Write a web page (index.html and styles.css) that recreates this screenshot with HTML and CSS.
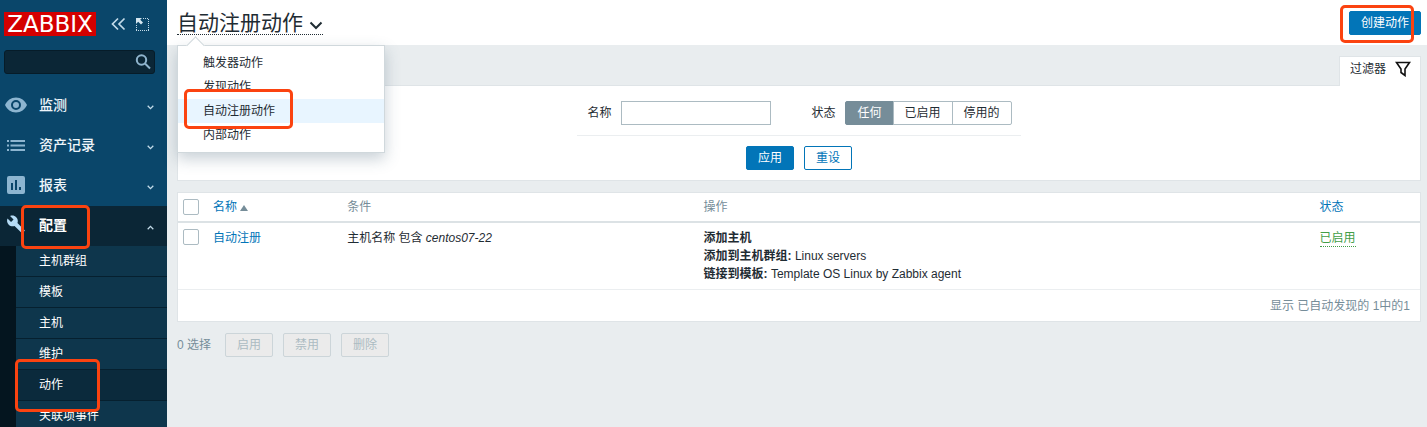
FILE: index.html
```html
<!DOCTYPE html>
<html lang="zh-CN">
<head>
<meta charset="utf-8">
<title>自动注册动作</title>
<link rel="stylesheet" href="styles.css">
</head>
<body>
<aside class="sidebar">
  <div class="brand">
    <a class="logo" href="#">ZABBIX</a>
    <button class="icon-button" type="button" aria-label="收起侧栏"><svg width="15" height="14" viewBox="0 0 15 14"><path d="M7 1.500L1.500 7L7 12.500M13.500 1.500L8 7L13.500 12.500"/></svg></button>
    <button class="icon-button" type="button" aria-label="隐藏侧栏"><svg width="13" height="13" viewBox="0 0 13 13"><path class="dots" d="M7 .5H13M12.500 1V12M.5 7V12M0 12.500H13"/><path class="solid" d="M0 0H6L4.200 1.800L7 4.600L5 6.500L2.200 3.800L0 6Z"/></svg></button>
  </div>
  <form class="search">
    <input type="text" aria-label="搜索">
    <button type="button" aria-label="搜索"><svg width="16" height="16" viewBox="0 0 16 16"><circle cx="6.500" cy="6" r="4.700"/><path d="M10 9.500L15 14.500"/></svg></button>
  </form>
  <nav class="menu">
    <a class="menu-item" href="#"><svg class="glyph" width="22" height="16" viewBox="0 0 22 16"><path fill-rule="evenodd" d="M11 .5C6 .5 2 3.500 0 8c2 4.500 6 7.500 11 7.500S20 12.500 22 8C20 3.500 16 .5 11 .5zM11 13a5 5 0 1 1 0-10a5 5 0 0 1 0 10zM11 5a3 3 0 1 0 0 6a3 3 0 0 0 0-6z"/></svg><span>监测</span><svg class="arrow" width="7" height="5" viewBox="0 0 7 5"><path d="M.7 .8L3.500 3.600L6.300 .8"/></svg></a>
    <a class="menu-item" href="#"><svg class="glyph" width="22" height="16" viewBox="0 0 22 16"><path d="M2 3h2v2H2zM5.500 3H20v2H5.500zM2 7.500h2v2H2zM5.500 7.500H20v2H5.500zM2 12h2v2H2zM5.500 12H20v2H5.500z"/></svg><span>资产记录</span><svg class="arrow" width="7" height="5" viewBox="0 0 7 5"><path d="M.7 .8L3.500 3.600L6.300 .8"/></svg></a>
    <a class="menu-item" href="#"><svg class="glyph" width="22" height="18" viewBox="0 0 22 18"><path fill-rule="evenodd" d="M4 0h14a2 2 0 0 1 2 2v14a2 2 0 0 1-2 2H4a2 2 0 0 1-2-2V2a2 2 0 0 1 2-2zM6 7v7h2V7zM10 4v10h2V4zM14 11v3h2v-3z"/></svg><span>报表</span><svg class="arrow" width="7" height="5" viewBox="0 0 7 5"><path d="M.7 .8L3.500 3.600L6.300 .8"/></svg></a>
    <a class="menu-item open" href="#"><svg class="glyph" width="22" height="20" viewBox="0 0 22 20"><path d="M17.500 16.300L11.300 10.100C12 8.300 11.600 6.300 10.200 4.800C8.700 3.300 6.500 3 4.700 3.800L7.800 6.900L5.600 9.100L2.400 6C1.600 7.800 2 10 3.500 11.500C4.900 12.900 7 13.300 8.700 12.600L14.900 18.800C15.200 19.100 15.700 19.100 16 18.800L17.600 17.200C17.900 17 17.900 16.500 17.500 16.300Z" transform="translate(-.2 -3.200) scale(1.120)"/></svg><span>配置</span><svg class="arrow" width="7" height="5" viewBox="0 0 7 5"><path d="M.7 4.200L3.500 1.400L6.300 4.200"/></svg><i class="mark mark-config"></i></a>
    <div class="submenu">
      <a href="#">主机群组</a>
      <a href="#">模板</a>
      <a href="#">主机</a>
      <a href="#">维护</a>
      <a class="current" href="#">动作<i class="mark mark-action"></i></a>
      <a href="#">关联项事件</a>
    </div>
  </nav>
</aside>
<main class="page">
  <header class="header">
    <div class="title-menu">
      <h1><button class="title" type="button">自动注册动作<svg width="14" height="9" viewBox="0 0 14 9"><path d="M1.500 1.500L7 7L12.500 1.500"/></svg></button></h1>
      <div class="popup">
        <a href="#">触发器动作</a>
        <a href="#">发现动作</a>
        <a class="selected" href="#">自动注册动作<i class="mark mark-auto"></i></a>
        <a href="#">内部动作</a>
      </div>
    </div>
    <div class="create"><button class="button primary" type="button">创建动作</button><i class="mark mark-create"></i></div>
  </header>
  <div class="content">
    <button class="filter-tab" type="button">过滤器<svg width="16" height="16" viewBox="0 0 16 16"><path d="M1.500 1.500H14.500L10 8V14.500L6 11.500V8Z"/></svg></button>
    <form class="filter">
      <div class="filter-fields">
        <label for="name">名称</label>
        <input class="text" id="name" type="text">
        <fieldset class="segments">
          <legend>状态</legend>
          <input type="radio" name="status" id="any" checked><label for="any">任何</label>
          <input type="radio" name="status" id="on"><label for="on">已启用</label>
          <input type="radio" name="status" id="off"><label for="off">停用的</label>
        </fieldset>
      </div>
      <div class="filter-actions">
        <button class="button primary" type="button">应用</button>
        <button class="button" type="button">重设</button>
      </div>
    </form>
    <table class="list">
      <colgroup><col class="col-check"><col class="col-name"><col class="col-cond"><col class="col-op"><col></colgroup>
      <thead>
        <tr><th><input type="checkbox" aria-label="全选"></th><th><a href="#">名称<span class="sort"></span></a></th><th>条件</th><th>操作</th><th><a href="#">状态</a></th></tr>
      </thead>
      <tbody>
        <tr><td><input type="checkbox" aria-label="选择 自动注册"></td><td><a href="#">自动注册</a></td><td>主机名称 包含 <em>centos07-22</em></td><td><b>添加主机</b><br><b>添加到主机群组:</b> Linux servers<br><b>链接到模板:</b> Template OS Linux by Zabbix agent</td><td><a class="enabled" href="#">已启用</a></td></tr>
      </tbody>
      <tfoot>
        <tr><td colspan="5">显示 已自动发现的 1中的1</td></tr>
      </tfoot>
    </table>
    <div class="bulk">
      <span>0 选择</span>
      <button class="button" type="button" disabled>启用</button>
      <button class="button" type="button" disabled>禁用</button>
      <button class="button" type="button" disabled>删除</button>
    </div>
  </div>
</main>
</body>
</html>
```
FILE: styles.css
```css
* { box-sizing: border-box; }

body {
  margin: 0;
  display: flex;
  height: 100vh;
  overflow: hidden;
  background: #e9edef;
  color: #1f2c33;
  font: 12px/18px "Liberation Sans", "Noto Sans CJK SC", sans-serif;
}

a { color: #0275b8; text-decoration: none; }
button, input { font: inherit; color: inherit; margin: 0; }
button { cursor: pointer; }
svg { flex: none; }

/* Sidebar */
.sidebar { flex: none; width: 167px; background: #0a466a; overflow: hidden; }
.brand { display: flex; align-items: center; gap: 10px; padding: 12px 4px 0; }
.logo {
  width: 92px;
  margin-right: 5px;
  background: #d40000;
  color: #fff;
  font: 23px/24px "DejaVu Sans", sans-serif;
  text-align: center;
}
.icon-button { display: flex; padding: 0; border: 0; background: none; }
.icon-button svg { fill: none; stroke: #c3dbe9; stroke-width: 1.7; }
.icon-button .dots { stroke-width: 1; stroke-dasharray: 1 1; }
.icon-button .solid { fill: #d5e6f0; stroke: none; }
.search {
  display: flex;
  align-items: center;
  height: 24px;
  margin: 14px 12px 0 4px;
  border: 1px solid #061c29;
  border-radius: 3px;
  background: #0b2636;
  color: #fff;
}
.search input { flex: 1; min-width: 0; padding: 0 6px; border: 0; outline: 0; background: none; }
.search button { display: flex; padding: 0 3px; border: 0; background: none; }
.search svg { fill: none; stroke: #8fb4cd; stroke-width: 2; }
.menu { padding-top: 12px; }
.menu-item {
  position: relative;
  display: flex;
  align-items: center;
  height: 40px;
  padding: 0 13px 2px 5px;
  color: #eef5fa;
  font-size: 14px;
  font-weight: 500;
}
.menu-item span { flex: 1; padding-left: 12px; }
.glyph { fill: #8db5d0; }
.arrow { margin-top: 4px; fill: none; stroke: #c3dbe9; stroke-width: 1.3; }
.menu-item.open { background: #0b2636; color: #fff; font-weight: 700; }
.open .glyph { fill: #b5dbf5; }
.submenu { border-left: 16px solid #04151f; background: #0e364c; }
.submenu a {
  position: relative;
  display: block;
  padding: 6px 0 6px 23px;
  border-bottom: 1px solid #06202f;
  color: #fff;
}
.submenu .current { padding-left: 21px; border-left: 2px solid #6fa8cb; background: #0b2a3c; }

/* Highlight frames laid over the controls */
.mark { position: absolute; z-index: 5; border: 3px solid #fb4310; border-radius: 5px; pointer-events: none; }
.mark-config { left: 21px; top: -1px; width: 69px; height: 44px; }
.mark-action { left: -3px; top: -11px; width: 85px; height: 53px; }
.mark-auto { left: 6px; top: -10px; width: 109px; height: 40px; }
.mark-create { right: 7px; top: -6px; width: 74px; height: 38px; }

/* Header */
.page { flex: 1; min-width: 0; }
.header {
  display: flex;
  justify-content: space-between;
  align-items: flex-start;
  height: 45px;
  padding: 11px 6px 0 10px;
  background: #fff;
}
.title-menu, .create { position: relative; }
h1 { margin: 0; font: inherit; }
.title {
  display: flex;
  align-items: center;
  gap: 6px;
  padding: 0;
  border: 0;
  border-bottom: 1px dotted #1f2c33;
  background: none;
  font-size: 21px;
  line-height: 23px;
}
.title svg { margin-top: 6px; fill: none; stroke: #1f2c33; stroke-width: 2; }
.popup {
  position: absolute;
  z-index: 3;
  left: 0;
  top: 34px;
  width: 208px;
  padding: 5px 0;
  border: 1px solid #d0d8dc;
  background: #fff;
  box-shadow: 0 6px 14px rgba(60, 90, 110, .28);
}
.popup::before {
  content: "";
  position: absolute;
  left: 11px;
  top: -7px;
  width: 12px;
  height: 12px;
  border: 1px solid #d0d8dc;
  border-width: 1px 0 0 1px;
  background: #fff;
  transform: rotate(45deg);
}
.popup a { position: relative; display: block; padding: 0 25px; color: #1f2c33; line-height: 24px; }
.popup .selected { background: #e8f5ff; }

.button {
  height: 24px;
  padding: 0 11px;
  border: 1px solid #0275b8;
  border-radius: 2px;
  background: #fff;
  color: #0275b8;
  line-height: 22px;
}
.button.primary { background: #0275b8; color: #fff; }
.button:disabled { border-color: #ccd5d9; background: #ebebeb; color: #acbbc2; }

/* Filter */
.content { display: flex; flex-direction: column; padding: 11px 6px 0 10px; }
.filter-tab {
  position: relative;
  align-self: flex-end;
  display: flex;
  align-items: center;
  gap: 9px;
  height: 30px;
  margin-bottom: -1px;
  padding: 0 9px 6px 10px;
  border: 1px solid #dfe4e7;
  border-bottom: 0;
  background: #fff;
}
.filter-tab svg { fill: none; stroke: #111; stroke-width: 1.6; }
.filter {
  display: flex;
  flex-direction: column;
  align-items: center;
  padding: 15px 0 10px;
  border: 1px solid #dfe4e7;
  background: #fff;
}
.filter-fields {
  display: flex;
  align-items: center;
  padding: 0 9px 10px 10px;
  border-bottom: 1px solid #ebeef0;
}
.text {
  width: 150px;
  height: 24px;
  margin: 0 40px 0 10px;
  padding: 0 5px;
  border: 1px solid #acbbc2;
}
.segments { display: flex; margin: 0; padding: 0; border: 0; }
.segments legend { float: left; padding: 0 10px 0 0; line-height: 24px; }
.segments input { position: absolute; opacity: 0; }
.segments label {
  height: 24px;
  margin-right: -1px;
  padding: 0 11px;
  border: 1px solid #acbbc2;
  line-height: 22px;
}
.segments label:last-child { margin: 0; border-radius: 0 2px 2px 0; }
.segments input:checked + label { border-color: #768d99; border-radius: 2px 0 0 2px; background: #768d99; color: #fff; }
.filter-actions { display: flex; gap: 10px; padding-top: 10px; }

/* List */
.list {
  width: 100%;
  margin: 11px 0;
  border: 1px solid #dfe4e7;
  border-spacing: 0;
  background: #fff;
  table-layout: fixed;
}
.col-check { width: 30px; }
.col-name { width: 10.8%; }
.col-cond { width: 28.7%; }
.col-op { width: 49.6%; }
th { height: 30px; padding: 0 5px; border-bottom: 2px solid #dce2e5; color: #768d99; font-weight: 400; text-align: left; }
td { padding: 6px 5px; vertical-align: top; }
tfoot td { padding: 7px 10px 6px; border-top: 1px solid #ebeef0; color: #768d99; text-align: right; }
.list input {
  appearance: none;
  display: block;
  width: 16px;
  height: 16px;
  border: 1px solid #acbbc2;
  border-radius: 2px;
  background: #fff;
}
.sort {
  display: inline-block;
  margin-left: 3px;
  border: 4px solid transparent;
  border-top: 0;
  border-bottom: 6px solid #768d99;
}
.enabled { display: inline-block; border-bottom: 1px dotted #429e47; color: #429e47; line-height: 16px; }
.bulk { display: flex; align-items: center; gap: 10px; color: #768d99; }
.bulk span { margin-right: 4px; }
```
